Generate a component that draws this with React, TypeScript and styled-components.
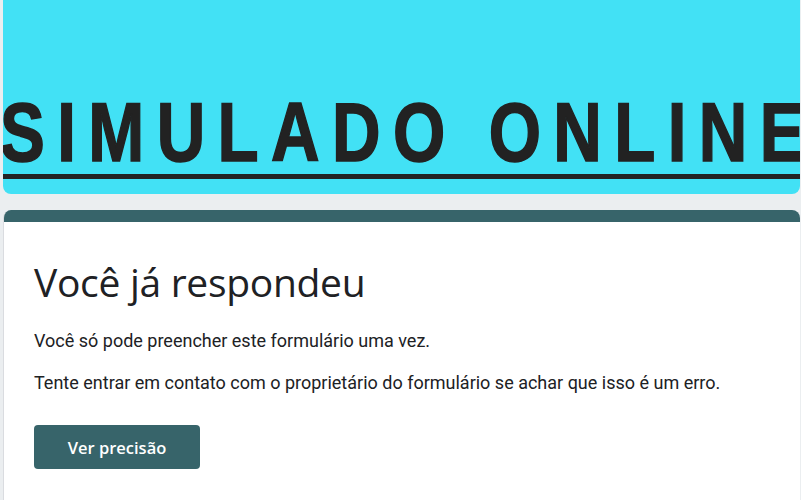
import React from "react";
import styled, { createGlobalStyle } from "styled-components";

const Global = createGlobalStyle`
  html, body { margin: 0; padding: 0; background: #ebeef0; }
  body { font-family: Roboto, "Liberation Sans", Arial, sans-serif; overflow: hidden; }
`;

const Page = styled.div`
  display: flex;
  flex-direction: column;
  gap: 16px;
  padding: 0 1px 0 3px;
  height: 500px;
  box-sizing: border-box;
`;

const Banner = styled.header`
  margin-top: -10px;
  height: 204px;
  background: #42e1f5;
  border-radius: 8px;
  overflow: hidden;
  display: flex;
  flex-direction: column;
  justify-content: flex-end;
  padding-bottom: 15px;
  box-sizing: border-box;
`;

const BannerTitle = styled.div`
  font-family: "Liberation Sans", Arial, sans-serif;
  font-weight: 700;
  font-size: 84px;
  line-height: 1;
  letter-spacing: 15.5px;
  color: #222222;
  -webkit-text-stroke: 1.6px #222222;
  white-space: nowrap;
  margin-left: -3px;
  transform: scaleX(0.8);
  transform-origin: left center;
`;

const BannerRule = styled.div`
  height: 5px;
  background: #232323;
`;

const Card = styled.main`
  flex: 1;
  background: #ffffff;
  border-radius: 8px 8px 0 0;
  border-left: 1px solid #dadce0;
  overflow: hidden;
  display: flex;
  flex-direction: column;
`;

const CardBand = styled.div`
  height: 12px;
  background: #37646a;
`;

const CardBody = styled.div`
  padding: 35px 24px 0 30px;
  display: flex;
  flex-direction: column;
  align-items: flex-start;
`;

const Heading = styled.h1`
  margin: 0 0 22px;
  font-family: "Open Sans", Roboto, sans-serif;
  font-weight: 400;
  font-size: 39px;
  line-height: 50px;
  color: #202124;
  letter-spacing: -0.3px;
`;

const Paragraph = styled.p`
  margin: 0 0 18px;
  font-family: Roboto, "Liberation Sans", sans-serif;
  font-size: 18px;
  line-height: 24px;
  color: #202124;
`;

const Button = styled.button`
  margin-top: 12px;
  width: 166px;
  height: 44px;
  border: none;
  border-radius: 4px;
  background: #37646a;
  color: #ffffff;
  font-family: "Open Sans", Roboto, sans-serif;
  font-weight: 600;
  font-size: 16.5px;
  cursor: pointer;
`;

export default function App() {
  return (
    <>
      <Global />
      <Page>
        <Banner>
          <BannerTitle>SIMULADO ONLINE</BannerTitle>
          <BannerRule />
        </Banner>
        <Card>
          <CardBand />
          <CardBody>
            <Heading>Você já respondeu</Heading>
            <Paragraph>Você só pode preencher este formulário uma vez.</Paragraph>
            <Paragraph>
              Tente entrar em contato com o proprietário do formulário se achar que isso é um erro.
            </Paragraph>
            <Button>Ver precisão</Button>
          </CardBody>
        </Card>
      </Page>
    </>
  );
}
